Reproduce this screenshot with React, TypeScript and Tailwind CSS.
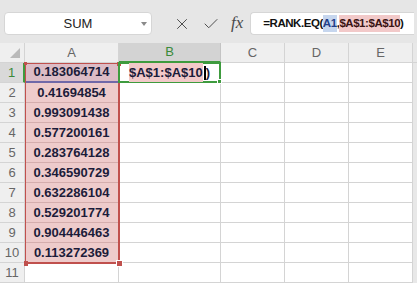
import { X, Check } from "lucide-react";

const values = [
  "0.183064714",
  "0.41694854",
  "0.993091438",
  "0.577200161",
  "0.283764128",
  "0.346590729",
  "0.632286104",
  "0.529201774",
  "0.904446463",
  "0.113272369",
];

const cols = ["C", "D", "E"];
const font = { fontFamily: '"Liberation Sans", Arial, sans-serif' };

export default function App() {
  return (
    <div className="w-[417px] h-[283px] overflow-hidden bg-white relative" style={font}>
      {/* formula bar */}
      <div className="h-[43px] bg-[#e6e6e6] flex items-start pt-[12px]">
        <div className="ml-[4px] w-[148px] h-[23px] bg-white rounded-[4px] border border-[#d6d6d6] relative flex items-center justify-center">
          <span className="text-[13px] text-[#222]">SUM</span>
          <span className="absolute right-[4px] top-[9px] w-0 h-0 border-l-[3px] border-r-[3px] border-t-[4px] border-l-transparent border-r-transparent border-t-[#8a8a8a]" />
        </div>
        <div className="flex items-center h-[23px] ml-[21px] gap-[11px] text-[#4a4a4a]">
          <X size={18} strokeWidth={1.3} />
          <Check size={18} strokeWidth={1.3} />
          <span className="italic text-[17px] text-[#4a4a4a] -mt-[2px]" style={{ fontFamily: '"Liberation Serif", serif' }}>
            fx
          </span>
        </div>
        <div className="ml-[7px] w-[164px] h-[23px] bg-white rounded-l-[4px] border border-[#d6d6d6] border-r-0 flex items-center pl-[12px] text-[11.5px] font-bold text-[#111] tracking-[-0.45px]">
          <span>=RANK.EQ(</span>
          <span className="bg-[#c6d6ee] text-[#23408a]">A1</span>
          <span>,</span>
          <span className="bg-[#f2c9c9] text-[#3a1414]">$A$1:$A$10</span>
          <span>)</span>
        </div>
      </div>

      {/* sheet */}
      <div className="grid grid-cols-[25px_94px_102px_64px_64px_64px_4px] grid-rows-[repeat(12,20px)] relative">
        {/* header row */}
        <div className="bg-[#efefef] border-r border-b border-[#d4d4d4] relative">
          <span className="absolute right-[4px] bottom-[4px] w-0 h-0" style={{ borderBottom: "10px solid #b9b9b9", borderLeft: "10px solid transparent" }} />
        </div>
        <div className="bg-[#efefef] border-r border-b border-[#d4d4d4] flex items-center justify-center text-[13px] text-[#666]">A</div>
        <div className="bg-[#d3d3d3] border-r border-[#c4c4c4] border-b-2 border-b-[#3e9b3e] flex items-center justify-center text-[13px] text-[#3a8a3a]">B</div>
        {cols.map((c) => (
          <div key={c} className="bg-[#efefef] border-r border-b border-[#d4d4d4] flex items-center justify-center text-[13px] text-[#666]">
            {c}
          </div>
        ))}
        <div className="bg-[#e8e8e8] border-b border-[#d4d4d4]" />

        {Array.from({ length: 11 }).map((_, i) => {
          const r = i + 1;
          const v = values[i];
          return [
            <div
              key={`h${r}`}
              className={
                r === 1
                  ? "bg-[#d9d9d9] border-r-2 border-r-[#3e9b3e] border-b border-b-[#d4d4d4] flex items-center justify-center text-[13px] text-[#3a8a3a]"
                  : "bg-[#efefef] border-r border-b border-[#d4d4d4] flex items-center justify-center text-[13px] text-[#666]"
              }
            >
              {r}
            </div>,
            <div
              key={`a${r}`}
              className={
                r === 1
                  ? "bg-[#dcbcc6] border-b-2 border-b-[#7068a8] border-r border-r-[#d4d4d4] flex items-center justify-center text-[13px] font-bold text-[#1c1c3a]"
                  : v
                  ? "bg-[#eecbcb] border-r border-b border-[#d4adad] flex items-center justify-center text-[13px] font-bold text-[#1c1c3a]"
                  : "border-r border-b border-[#d4d4d4]"
              }
            >
              {v}
            </div>,
            <div key={`b${r}`} className="border-r border-b border-[#d4d4d4] relative">
              {r === 1 && (
                <div className="absolute -left-[1px] -top-[1px] w-[103px] h-[21px] border-2 border-[#3e9b3e] flex items-center pl-[9px] text-[13px] font-bold text-[#1c1c3a] z-10">
                  <span className="bg-[#f2c9c9] text-[#1c1c3a]">$A$1:$A$10</span>
                  <span className="w-[2px] h-[14px] bg-black ml-[1px]" />
                  <span>)</span>
                  <span className="absolute -right-[3px] -bottom-[3px] w-[5px] h-[5px] bg-[#3e9b3e] border border-white" />
                </div>
              )}
            </div>,
            ...cols.map((c) => <div key={`${c}${r}`} className="border-r border-b border-[#d4d4d4]" />),
            <div key={`s${r}`} className="bg-[#e8e8e8]" />,
          ];
        })}

        {/* range reference border A1:A10 */}
        <div className="absolute left-[25px] top-[20px] w-[95px] h-[201px] border-l border-t border-r-2 border-b-2 border-[#c0504d] pointer-events-none">
          <span className="absolute -left-[2px] -top-[2px] w-[3px] h-[3px] bg-[#c0504d]" />
          <span className="absolute -right-[3px] -top-[2px] w-[4px] h-[4px] bg-[#c0504d]" />
          <span className="absolute -left-[2px] -bottom-[4px] w-[4px] h-[5px] bg-[#c0504d]" />
          <span className="absolute -right-[5px] -bottom-[5px] w-[7px] h-[7px] bg-[#c0504d] border border-white" />
        </div>
      </div>
    </div>
  );
}
